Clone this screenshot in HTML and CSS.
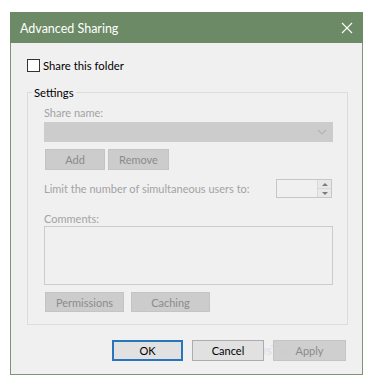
FILE: index.html
```html
<!DOCTYPE html>
<html lang="en">
<head>
  <meta charset="UTF-8" />
  <title>Advanced Sharing</title>
  <link rel="stylesheet" href="styles.css">
</head>
<body>
  <div class="dialog">
    <div class="titlebar">
      <span class="title">Advanced Sharing</span>
      <svg class="close" width="12" height="12" viewBox="0 0 12 12">
        <path d="M1 1 L11 11 M11 1 L1 11" stroke="#ffffff" stroke-width="1.1" fill="none" />
      </svg>
    </div>

    <div class="content">
      <label class="check-row">
        <span class="checkbox"></span>
        <span>Share this folder</span>
      </label>

      <div class="group">
        <span class="legend">Settings</span>

        <div class="lbl">Share name:</div>
        <div class="combo">
          <svg class="chevron" width="10" height="6" viewBox="0 0 10 6">
            <path d="M1 1 L5 5 L9 1" stroke="#b4b4b4" stroke-width="1.2" fill="none" />
          </svg>
        </div>

        <div class="btn-row">
          <button class="btn disabled w-add">Add</button>
          <button class="btn disabled w-remove">Remove</button>
        </div>

        <div class="limit-row">
          <span class="lbl">Limit the number of simultaneous users to:</span>
          <div class="spin">
            <div class="spin-field"></div>
            <div class="spin-btns">
              <span class="arrow up"></span>
              <span class="arrow down"></span>
            </div>
          </div>
        </div>

        <div class="lbl comments-lbl">Comments:</div>
        <div class="textarea"></div>

        <div class="btn-row lower">
          <button class="btn disabled w-perm">Permissions</button>
          <button class="btn disabled w-cache">Caching</button>
        </div>
      </div>

      <div class="footer">
        <button class="btn default w-ok">OK</button>
        <button class="btn w-cancel">Cancel</button>
        <span class="watermark">wsTip</span>
        <button class="btn disabled w-apply">Apply</button>
      </div>
    </div>
  </div>
</body>
</html>
```

FILE: styles.css
```css
body {
  margin: 0;
  background: #ffffff;
  font-family: 'Segoe UI', Lato, 'Noto Sans', sans-serif;
  font-size: 11px;
  color: #000000;
}
.dialog {
  margin: 12px 0 0 10px;
  width: 351px;
  border: 1px solid #7d9477;
  border-top: none;
  background: #f0f0f0;
}
.titlebar {
  height: 31px;
  background: #6b8a65;
  color: #ffffff;
  display: flex;
  align-items: center;
  justify-content: space-between;
  padding: 0 10px 0 10px;
  margin: 0 -1px;
}
.title {
  font-size: 12.5px;
  margin-top: 1px;
}
.close {
  margin-right: 0;
}
.content {
  padding: 16px 15px 13px 15px;
}
.check-row {
  display: flex;
  align-items: center;
  gap: 3px;
  height: 13px;
  margin-left: 1px;
  font-size: 11.3px;
}
.checkbox {
  width: 11px;
  height: 11px;
  border: 1px solid #333333;
  background: #ffffff;
}
.group {
  margin: 20px 0 0 1px;
  width: 289px;
  border: 1px solid #dcdcdc;
  padding: 0 14px 12px 16px;
}
.legend {
  display: block;
  width: max-content;
  background: #f0f0f0;
  padding: 0 2px;
  margin: -8px 0 0 -12px;
  line-height: 15px;
  font-size: 11.3px;
}
.lbl {
  color: #a3a3a3;
  line-height: 15px;
}
.group > .lbl {
  margin-top: 5px;
}
.combo {
  margin-top: 2px;
  height: 20px;
  background: #cccccc;
  display: flex;
  align-items: center;
  justify-content: flex-end;
  padding-right: 6px;
}
.btn-row {
  display: flex;
  gap: 3px;
  margin-top: 7px;
  margin-left: 1px;
}
.btn {
  height: 21px;
  padding: 0;
  font-family: inherit;
  font-size: 11px;
  background: #e1e1e1;
  border: 1px solid #adadad;
  color: #000000;
}
.btn.disabled {
  background: #cccccc;
  border-color: #c4c4c4;
  color: #8b8b8b;
}
.btn.default {
  border: 2px solid #2a73bd;
}
.w-add { width: 60px; }
.w-remove { width: 61px; }
.w-perm { width: 79px; }
.w-cache { width: 79px; }
.w-ok { width: 71px; }
.w-cancel { width: 72px; }
.w-apply { width: 73px; }
.limit-row {
  display: flex;
  align-items: center;
  justify-content: space-between;
  margin-top: 9px;
}
.spin {
  width: 54px;
  height: 17px;
  border: 1px solid #c6c6c6;
  display: flex;
  margin-right: 1px;
}
.spin-field {
  flex: 1;
  background: #f0f0f0;
}
.spin-btns {
  width: 13px;
  display: flex;
  flex-direction: column;
  border-left: 1px solid #d9d9d9;
}
.arrow {
  flex: 1;
  display: flex;
  align-items: center;
  justify-content: center;
  background: #e8e8e8;
}
.arrow.up {
  border-bottom: 1px solid #d9d9d9;
}
.arrow::after {
  content: '';
  border-left: 3px solid transparent;
  border-right: 3px solid transparent;
}
.arrow.up::after {
  border-bottom: 3px solid #7a7a7a;
}
.arrow.down::after {
  border-top: 3px solid #7a7a7a;
}
.group > .comments-lbl {
  margin-top: 14px;
  line-height: 13px;
}
.textarea {
  margin-top: 1px;
  height: 57px;
  border: 1px solid #cccccc;
  background: #f0f0f0;
}
.btn-row.lower {
  gap: 7px;
  margin-top: 7px;
  height: 20px;
}
.btn-row.lower .btn {
  height: 20px;
}
.footer {
  position: relative;
  display: flex;
  justify-content: flex-end;
  gap: 9px;
  margin-top: 15px;
  padding-right: 1px;
}
.watermark {
  position: absolute;
  right: 58px;
  top: 2px;
  font-size: 13px;
  color: #dde3ea;
  font-weight: bold;
  z-index: 0;
}
.footer .btn {
  position: relative;
  z-index: 1;
}
.footer .w-apply {
  background: rgba(204, 204, 204, 0.95);
}
```
